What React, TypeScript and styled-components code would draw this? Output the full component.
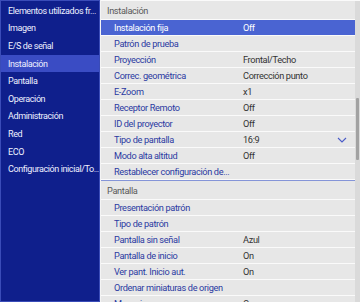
import React from 'react'
import styled, { createGlobalStyle } from 'styled-components'

const GlobalStyle = createGlobalStyle`
  html, body {
    margin: 0;
    padding: 0;
    background: #f2f2f2;
  }
  body {
    font-family: Roboto, "Noto Sans", sans-serif;
    letter-spacing: -0.35px;
  }
`

const menu = [
  'Elementos utilizados fr...',
  'Imagen',
  'E/S de señal',
  'Instalación',
  'Pantalla',
  'Operación',
  'Administración',
  'Red',
  'ECO',
  'Configuración inicial/To...',
]

type Row = { label: string; value?: string; select?: boolean; active?: boolean }

const install: Row[] = [
  { label: 'Instalación fija', value: 'Off', active: true },
  { label: 'Patrón de prueba' },
  { label: 'Proyección', value: 'Frontal/Techo' },
  { label: 'Correc. geométrica', value: 'Corrección punto' },
  { label: 'E-Zoom', value: 'x1' },
  { label: 'Receptor Remoto', value: 'Off' },
  { label: 'ID del proyector', value: 'Off' },
  { label: 'Tipo de pantalla', value: '16:9', select: true },
  { label: 'Modo alta altitud', value: 'Off' },
  { label: 'Restablecer configuración de...' },
]

const screen: Row[] = [
  { label: 'Presentación patrón' },
  { label: 'Tipo de patrón' },
  { label: 'Pantalla sin señal', value: 'Azul' },
  { label: 'Pantalla de inicio', value: 'On' },
  { label: 'Ver pant. Inicio aut.', value: 'On' },
  { label: 'Ordenar miniaturas de origen' },
  { label: 'Mensajes', value: 'On' },
]

const Screen = styled.div`
  width: 360px;
  height: 302px;
  display: flex;
  gap: 1px;
  overflow: hidden;
  background: #f4f4f4;
`

const Sidebar = styled.nav`
  width: 98px;
  flex: none;
  background: #0f1f8c;
  border: 1px solid #3a4cb8;
  padding-top: 1px;
  box-sizing: content-box;
`

const MenuItem = styled.div<{ $on?: boolean }>`
  height: 17.6px;
  display: flex;
  align-items: center;
  padding-left: 7px;
  font-size: 9px;
  letter-spacing: -0.4px;
  color: #eef0ff;
  white-space: nowrap;
  overflow: hidden;
  background: ${(p) => (p.$on ? '#3a4cc4' : 'transparent')};
`

const Panel = styled.section`
  flex: 1;
  display: flex;
  background: #e7e7e7;
  border-top: 1px solid #fafafa;
`

const List = styled.div`
  flex: 1;
  display: flex;
  flex-direction: column;
`

const Header = styled.div<{ $line?: boolean }>`
  height: 18px;
  flex: none;
  display: flex;
  align-items: center;
  padding-left: 6px;
  font-size: 9.2px;
  color: #5a5a5a;
  border-top: ${(p) => (p.$line ? '1px solid #8595d8' : 'none')};
  border-bottom: 1px solid #fafafa;
`

const RowBox = styled.div<{ $on?: boolean }>`
  height: 15px;
  flex: none;
  display: flex;
  align-items: center;
  font-size: 9.2px;
  border-bottom: 1px solid #fafafa;
  background: ${(p) => (p.$on ? '#4a64d2' : 'transparent')};
`

const Label = styled.span<{ $on?: boolean }>`
  width: 129px;
  padding-left: 13px;
  color: ${(p) => (p.$on ? '#ffffff' : '#2b3aa2')};
  white-space: nowrap;
`

const Value = styled.span<{ $on?: boolean }>`
  flex: 1;
  color: ${(p) => (p.$on ? '#ffffff' : '#333333')};
  white-space: nowrap;
`

const Chevron = styled.svg`
  margin-right: 8px;
`

const Scrollbar = styled.div`
  width: 5px;
  flex: none;
  background: #dadada;
  display: flex;
  flex-direction: column;
  padding-top: 97px;
`

const Thumb = styled.div`
  width: 3px;
  height: 62px;
  margin-left: 1px;
  background: #a2a2a2;
  border-radius: 1px;
`

const ListRow = ({ row }: { row: Row }) => (
  <RowBox $on={row.active}>
    <Label $on={row.active}>{row.label}</Label>
    <Value $on={row.active}>{row.value}</Value>
    {row.select && (
      <Chevron width="10" height="6" viewBox="0 0 10 6">
        <path d="M1 1 L5 5 L9 1" fill="none" stroke="#4a5cc8" strokeWidth="1.1" />
      </Chevron>
    )}
  </RowBox>
)

export default function App() {
  return (
    <Screen>
      <GlobalStyle />
      <Sidebar>
        {menu.map((m) => (
          <MenuItem key={m} $on={m === 'Instalación'}>
            {m}
          </MenuItem>
        ))}
      </Sidebar>
      <Panel>
        <List>
          <Header>Instalación</Header>
          {install.map((r) => (
            <ListRow key={r.label} row={r} />
          ))}
          <Header $line>Pantalla</Header>
          {screen.map((r) => (
            <ListRow key={r.label} row={r} />
          ))}
        </List>
        <Scrollbar>
          <Thumb />
        </Scrollbar>
      </Panel>
    </Screen>
  )
}
